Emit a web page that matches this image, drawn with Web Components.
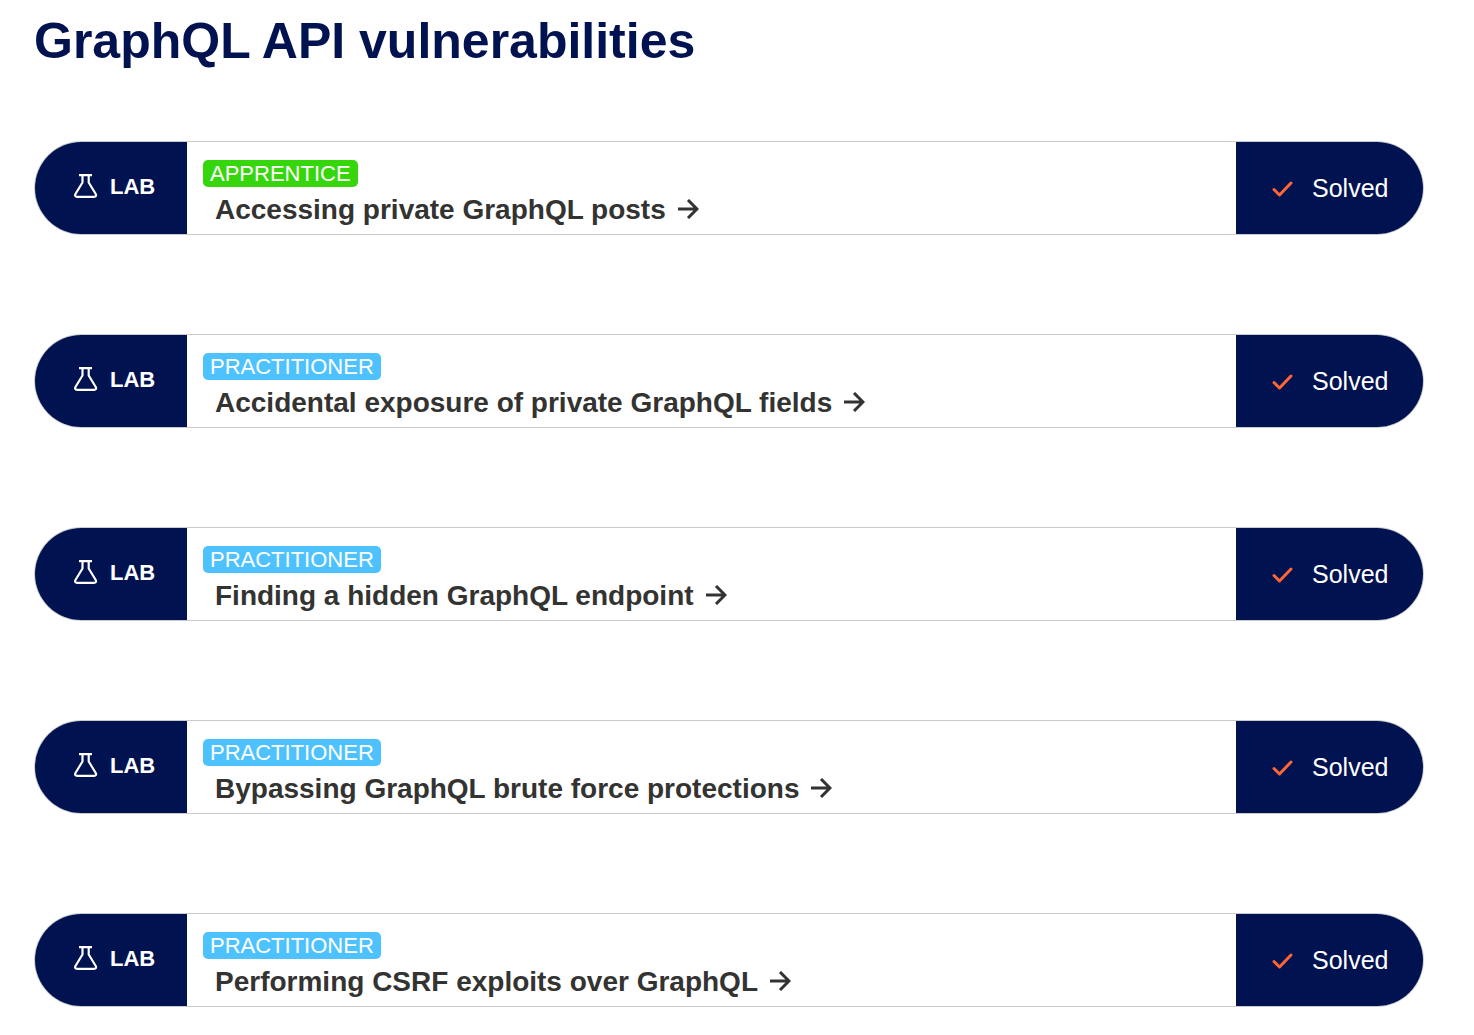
<!DOCTYPE html>
<html lang="en">
<head>
<meta charset="utf-8">
<title>GraphQL API vulnerabilities</title>
<style>
body { margin: 0; background: #fff; font-family: "Liberation Sans", Arial, sans-serif; color: #333332; }
</style>
</head>
<body>
<lab-section>
  <span slot="heading">GraphQL API vulnerabilities</span>
  <lab-card level="apprentice">Accessing private GraphQL posts</lab-card>
  <lab-card level="practitioner">Accidental exposure of private GraphQL fields</lab-card>
  <lab-card level="practitioner">Finding a hidden GraphQL endpoint</lab-card>
  <lab-card level="practitioner">Bypassing GraphQL brute force protections</lab-card>
  <lab-card level="practitioner">Performing CSRF exploits over GraphQL</lab-card>
</lab-section>

<template id="section-template">
  <style>
    :host { display: block; padding: 12px 50px 28px 34px; }
    h1 { margin: 0 0 71px; font-size: 50px; line-height: 58px; font-weight: 700; color: #00124f; }
    .list { display: flex; flex-direction: column; gap: 99px; }
  </style>
  <h1><slot name="heading"></slot></h1>
  <div class="list"><slot></slot></div>
</template>

<template id="card-template">
  <style>
    :host { display: flex; box-sizing: border-box; min-height: 94px; border: 1px solid #c8cacc; border-radius: 47px; overflow: hidden; background: #fff; }
    .lab, .status { display: flex; align-items: center; flex: none; box-sizing: border-box; background: #00124f; color: #fff; }
    .lab { width: 152px; padding: 0 0 2px 39px; gap: 12px; font-size: 22px; font-weight: 700; }
    .status { width: 187px; padding: 1px 0 0 36px; gap: 19px; font-size: 25px; }
    .body { flex: 1; min-width: 0; display: flex; flex-direction: column; align-items: flex-start; padding: 18px 16px 8px; }
    a { margin: 7px 0 0 12px; font-size: 28px; line-height: 32px; font-weight: 700; color: inherit; text-decoration: none; display: flex; align-items: center; gap: 12px; }
    svg { display: block; flex: none; fill: none; stroke: currentColor; }
    .flask, .arrow { margin-bottom: 2px; }
    .tick { color: #ff6633; }
  </style>
  <div class="lab">
    <svg class="flask" width="24" height="24" viewBox="0 0 24 24" stroke-width="2.200" stroke-linejoin="round" aria-hidden="true"><path d="M5 1.100h13M8.500 1v7.500L1.600 19.800q-1.500 3 1.700 3h16.600q3.200 0 1.700-3L14.700 8.500V1"/></svg>
    <span>LAB</span>
  </div>
  <div class="body">
    <level-badge></level-badge>
    <a href="#"><slot></slot><svg class="arrow" width="21" height="20" viewBox="0 0 21 20" stroke-width="3" aria-hidden="true"><path d="M0 10h19M10 1l9 9-9 9"/></svg></a>
  </div>
  <div class="status">
    <svg class="tick" width="21" height="16" viewBox="0 0 21 16" stroke-width="3" stroke-linecap="round" stroke-linejoin="round" aria-hidden="true"><path d="M2 8.500l5.500 5.500L19 2"/></svg>
    <span>Solved</span>
  </div>
</template>

<template id="badge-template">
  <style>
    :host { display: block; padding: 0 7px; border-radius: 5px; background: #4dc2ff; color: #fff; font-size: 22px; line-height: 27px; text-transform: uppercase; }
    :host([level="apprentice"]) { background: #36d60c; }
  </style>
  <span></span>
</template>

<script>
function stamp(host, id) {
  const root = host.attachShadow({ mode: "open" });
  root.append(document.getElementById(id).content.cloneNode(true));
  return root;
}
class LevelBadge extends HTMLElement {
  static observedAttributes = ["level"];
  constructor() { super(); stamp(this, "badge-template"); }
  attributeChangedCallback(name, before, value) {
    this.shadowRoot.querySelector("span").textContent = value.toUpperCase();
  }
}
class LabCard extends HTMLElement {
  constructor() { super(); stamp(this, "card-template"); }
  connectedCallback() {
    this.shadowRoot.querySelector("level-badge").setAttribute("level", this.getAttribute("level"));
  }
}
class LabSection extends HTMLElement {
  constructor() { super(); stamp(this, "section-template"); }
}
customElements.define("level-badge", LevelBadge);
customElements.define("lab-card", LabCard);
customElements.define("lab-section", LabSection);
</script>
</body>
</html>
